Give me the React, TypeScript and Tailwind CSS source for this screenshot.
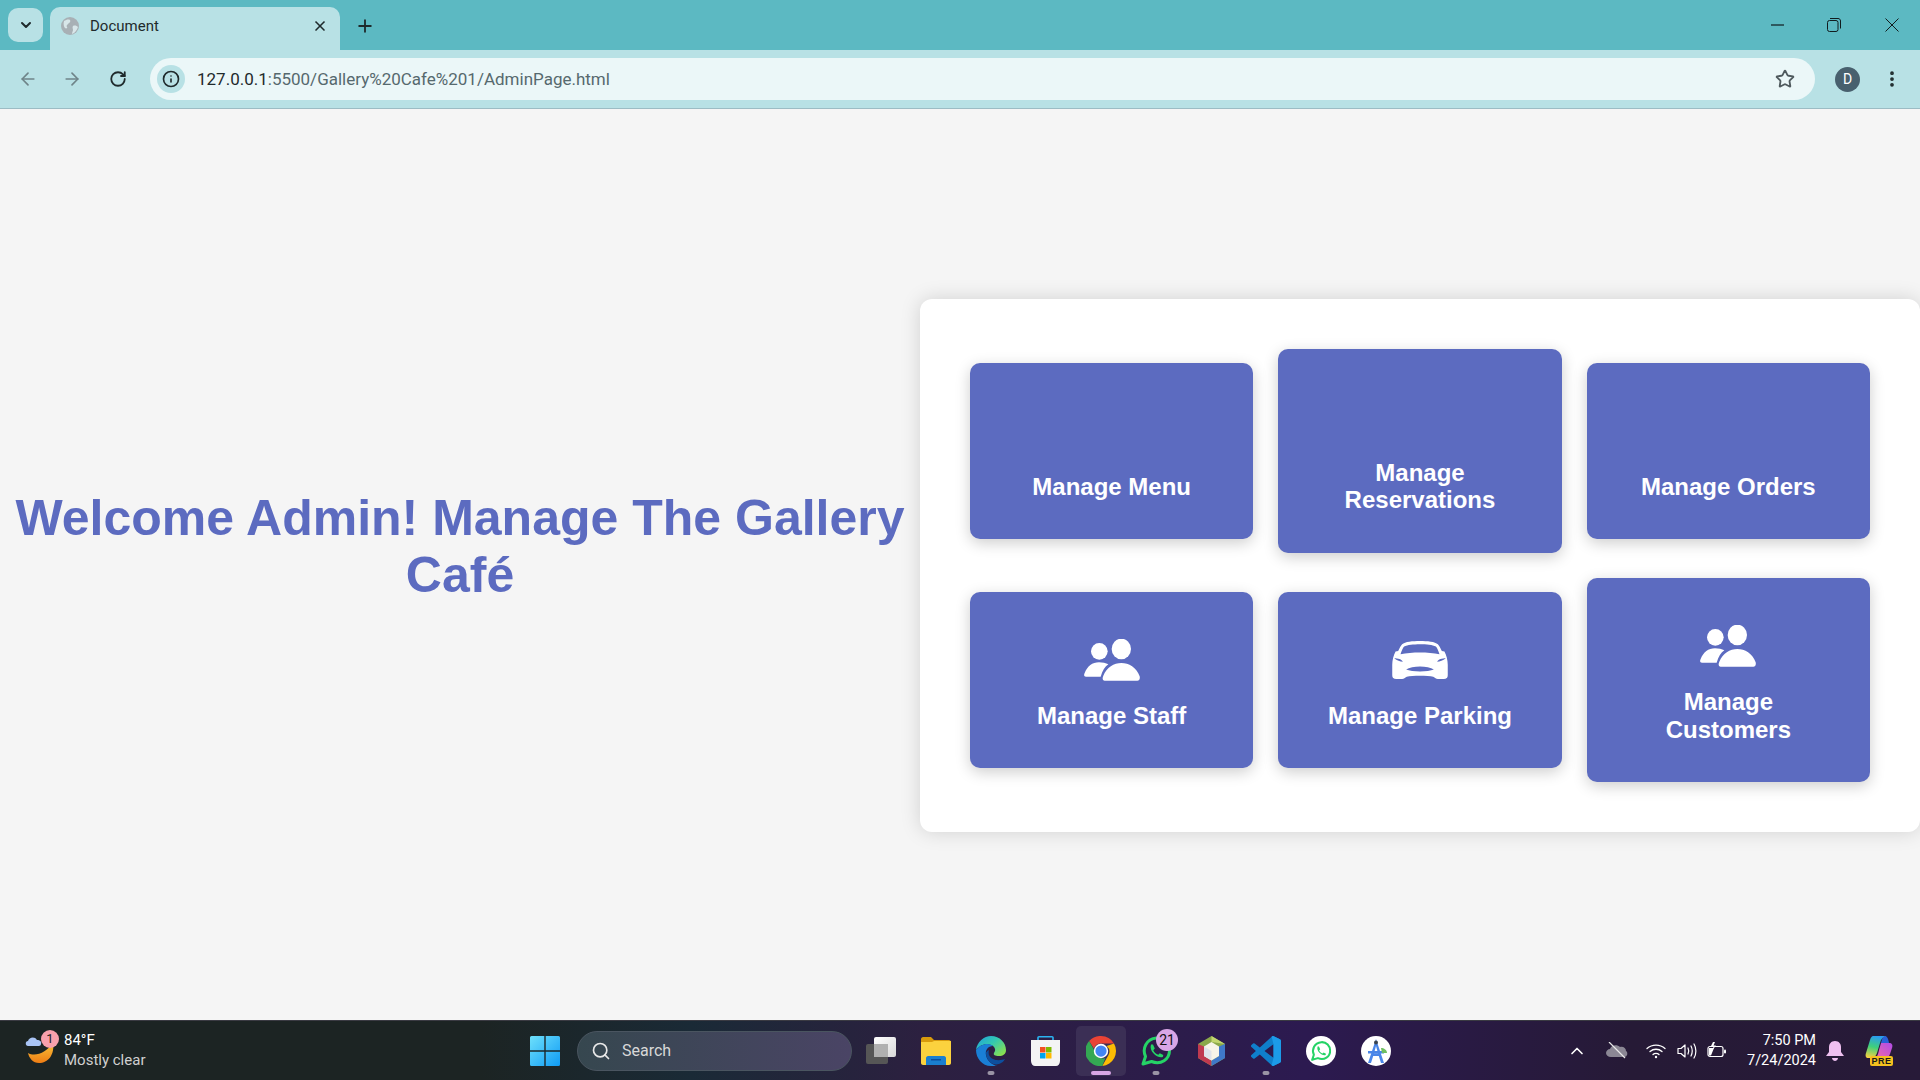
import React from 'react';
import { ArrowLeft, ArrowRight, RotateCw, Plus, X, ChevronDown, ChevronUp, Search, EllipsisVertical, Info, Star } from 'lucide-react';

const StaffIcon = () => (
    <svg width="56" height="42" viewBox="0 0 168 126" fill="#fff">
        <circle cx="46" cy="37" r="25" />
        <ellipse cx="112" cy="30" rx="29" ry="31" />
        <path d="M62 125C56 125 54 118 58 110C68 85 90 72 112 72C134 72 158 85 167 112C169 120 165 125 160 125Z" />
        <path d="M6 113C0 113-1 108 2 102C10 82 25 70 45 70C55 70 66 72 73 76C63 83 55 95 50 113Z" />
    </svg>
);

const CarIcon = () => (
    <svg width="56" height="38" viewBox="0 0 168 115" fill="#fff" fillRule="evenodd">
        <path d="M84 0C62 0 38 2 30 10C26 14 22 22 18 30L10 32C4 44 0 58 0 72L0 104C0 112 4 115 12 115L30 115C36 115 38 110 44 108C60 104 108 104 124 108C130 110 132 115 138 115L156 115C164 115 168 112 168 104L168 72C168 58 164 44 158 32L150 30C146 22 142 14 138 10C130 2 106 0 84 0ZM84 10C64 10 46 12 36 17C32 20 28 32 25 40C60 33 108 33 143 40C140 32 136 20 132 17C122 12 104 10 84 10ZM6 52C14 58 24 63 32 63C30 55 16 52 6 52ZM162 52C154 58 144 63 136 63C138 55 152 52 162 52ZM42 86C60 74 108 74 126 86C108 94 60 94 42 86Z" />
    </svg>
);

const Card = ({ title, icon }: { title: string; icon?: React.ReactNode }) => (
    <div className="bg-[#5c6bc0] rounded-[10px] shadow-[0_4px_15px_rgba(0,0,0,0.2)] pt-[36px] pb-[39px] px-[35px] flex flex-col items-center text-center">
        <div className="h-[64px] mb-[10px] flex items-center justify-center">{icon}</div>
        <h3 className="text-white font-bold text-[24px] leading-[27.6px] font-['Liberation_Sans',sans-serif]">{title}</h3>
    </div>
);

const GlobeIcon = () => (
    <svg width="18" height="18" viewBox="0 0 18 18">
        <circle cx="9" cy="9" r="9" fill="#a8b0b5" />
        <path d="M3 4c2-1 4-2 6-1 1 2-1 3-2 4s-2 2-1 3-1 2-2 1-2-4-1-7zM12 9c2-1 4 0 5 1-1 3-3 6-6 7 0-2 1-3 1-4s-1-3 0-4z" fill="#d8e6e9" />
    </svg>
);

const WinLogo = () => (
    <svg width="30" height="30" viewBox="0 0 30 30">
        <defs>
            <linearGradient id="win" x1="0" y1="0" x2="1" y2="1">
                <stop offset="0" stopColor="#6ee0fb" />
                <stop offset="1" stopColor="#0f9bf5" />
            </linearGradient>
        </defs>
        <path d="M0 1.500A1.500 1.500 0 0 1 1.500 0H14.300V14.300H0ZM15.700 0H28.500A1.500 1.500 0 0 1 30 1.500V14.300H15.700ZM0 15.700H14.300V30H1.500A1.500 1.500 0 0 1 0 28.500ZM15.700 15.700H30V28.500A1.500 1.500 0 0 1 28.500 30H15.700Z" fill="url(#win)" />
    </svg>
);

const WeatherIcon = () => (
    <svg width="30" height="36" viewBox="0 0 30 36">
        <defs>
            <linearGradient id="moon" x1="0" y1="0" x2="0" y2="1">
                <stop offset="0" stopColor="#f9c63c" />
                <stop offset="1" stopColor="#ee7d14" />
            </linearGradient>
        </defs>
        <path d="M3 20C10 24 22 20 28 9C30 22 23 30 14 30C8 30 4 25 3 20Z" fill="url(#moon)" />
        <path d="M3 13C0 13 0 8 3 8C4 4 10 3 12 7C15 7 17 9 16 11C16 12 15 13 14 13Z" fill="#a9c4f5" />
    </svg>
);

const TaskViewIcon = () => (
    <svg width="30" height="27" viewBox="0 0 30 27">
        <defs>
            <linearGradient id="tv" x1="0" y1="0" x2="1" y2="1">
                <stop offset="0" stopColor="#ffffff" />
                <stop offset="1" stopColor="#d8d8d8" />
            </linearGradient>
        </defs>
        <rect x="0" y="7" width="22" height="20" rx="2" fill="#565656" />
        <rect x="8" y="0" width="22" height="20" rx="2" fill="url(#tv)" />
        <rect x="8" y="7" width="14" height="13" fill="#b0b0b0" />
    </svg>
);

const FolderIcon = () => (
    <svg width="30" height="28" viewBox="0 0 30 28">
        <path d="M0 2C0 1 1 0 2 0H10L13 3H28C29 3 30 4 30 5V10H0Z" fill="#d89b0c" />
        <path d="M0 5H11L13 4H30V26C30 27 29 28 28 28H2C1 28 0 27 0 26Z" fill="#fbd23e" />
        <path d="M5 21C5 20 6 19 7 19H23C24 19 25 20 25 21V28H5Z" fill="#1a7fd0" />
        <rect x="10" y="22" width="10" height="1.500" fill="#0b4e9e" />
    </svg>
);

const EdgeIcon = () => (
    <svg width="30" height="30" viewBox="0 0 30 30">
        <defs>
            <linearGradient id="edge1" x1="0" y1="0" x2="1" y2="0.800">
                <stop offset="0" stopColor="#1f9fe0" />
                <stop offset="0.500" stopColor="#33c9b0" />
                <stop offset="1" stopColor="#8be04e" />
            </linearGradient>
        </defs>
        <path d="M0 14C1 6 8 0 15 0C24 0 30 7 30 14C30 18 27 20 23 20C19 20 17 19 18 17C19 15 20 14 18 11C15 7 5 7 0 14Z" fill="url(#edge1)" />
        <path d="M0 14C4 8 13 6 17 10C12 10 9 14 10 19C11 25 17 30 21 29C19 30 17 30 15 30C6 30 0 22 0 14Z" fill="#1a7fd6" />
        <path d="M10 17C10 24 16 30 23 28C26 27 28 25 29 23C26 24 21 25 17 23C13 21 12 18 13 14C11 15 10 16 10 17Z" fill="#0d4f9e" />
    </svg>
);

const StoreIcon = () => (
    <svg width="30" height="30" viewBox="0 0 30 30">
        <path d="M7 5V1.500C7 1 7.500 0.800 8 0.800H21C21.500 0.800 22 1 22 1.500V5" fill="none" stroke="#2bb3f0" strokeWidth="1.600" />
        <path d="M0 4H29V25C29 28 27 30 25 30H4C2 30 0 28 0 25Z" fill="#f4f4f4" />
        <rect x="9" y="11" width="5.500" height="5.500" fill="#f25022" />
        <rect x="15" y="11" width="5.500" height="5.500" fill="#7fba00" />
        <rect x="9" y="17" width="5.500" height="5.500" fill="#00a4ef" />
        <rect x="15" y="17" width="5.500" height="5.500" fill="#ffb900" />
    </svg>
);

const ChromeIcon = () => (
    <svg width="30" height="30" viewBox="0 0 48 48">
        <path d="M24 0a24 24 0 0 1 20.800 12H24a12 12 0 0 0-11.300 8L5 8A24 24 0 0 1 24 0Z" fill="#ea4335" />
        <path d="M44.800 12A24 24 0 0 1 26 47.900L36 30.500A12 12 0 0 0 33 16Z" fill="#fbbc04" />
        <path d="M5 8l10 18a12 12 0 0 0 16 9L26 48A24 24 0 0 1 5 8Z" fill="#34a853" />
        <circle cx="24" cy="24" r="11.500" fill="#fff" />
        <circle cx="24" cy="24" r="9" fill="#4285f4" />
    </svg>
);

const WhatsAppIcon = () => (
    <svg width="30" height="30" viewBox="0 0 30 30">
        <path d="M2 28L4.500 20.500C1 13 5 3 15.500 2C23 1.500 28.500 7.500 28.500 14.500C28.500 23 20 29.500 10.500 25.500Z" fill="none" stroke="#25d366" strokeWidth="3" strokeLinejoin="round" />
        <path d="M10 8.500L12 8.500L13.800 12.500L12.300 14.200C13.300 16.200 14.800 17.700 17.300 18.700L18.800 17.200L22.300 18.900L21.800 20.900C17.500 23 7.500 16 10 8.500Z" fill="#25d366" />
    </svg>
);

const GemIcon = () => (
    <svg width="27" height="30" viewBox="0 0 27 30">
        <path d="M13.500 0L27 8V22L13.500 30L0 22V8Z" fill="#8aa84a" />
        <path d="M13.500 0L27 8L13.500 6Z" fill="#c2d66f" />
        <path d="M0 8L6 10.500V20L13.500 24.500V30L0 22Z" fill="#c0394f" />
        <path d="M27 8L21 10.500V20L13.500 24.500V30L27 22Z" fill="#3f78c9" />
        <path d="M6 10.500L13.500 6L21 10.500V20L13.500 24.500L6 20Z" fill="#f6f4e8" />
        <path d="M6 10.500L13.500 15V24.500L6 20Z" fill="#dfe3ea" />
    </svg>
);

const VSCodeIcon = () => (
    <svg width="30" height="30" viewBox="0 0 100 100">
        <path d="M70.900 99.300A6.200 6.200 0 0 0 75.900 99.100L96.500 89.200A6.200 6.200 0 0 0 100 83.600V16.400A6.200 6.200 0 0 0 96.500 10.800L75.900 0.900A6.200 6.200 0 0 0 68.800 2.100L29.400 38.100L12.200 25A4.200 4.200 0 0 0 6.900 25.200L1.400 30.300A4.200 4.200 0 0 0 1.400 36.500L16.300 50L1.400 63.600A4.200 4.200 0 0 0 1.400 69.800L6.900 74.800A4.200 4.200 0 0 0 12.200 75L29.400 62L68.800 97.900ZM75 27.300L45.100 50L75 72.700Z" fill="#0f7fcb" fillRule="evenodd" />
        <path d="M70.900 99.300A6.200 6.200 0 0 0 75.900 99.100L96.500 89.200A6.200 6.200 0 0 0 100 83.600V16.400A6.200 6.200 0 0 0 96.500 10.800L75.900 0.900A6.200 6.200 0 0 0 68.800 2.100L75 27.300V72.700L68.800 97.900Z" fill="#1c9be8" />
    </svg>
);

const WhatsAppWhite = () => (
    <div className="w-[30px] h-[30px] rounded-full bg-white flex items-center justify-center">
        <div className="scale-[0.68] flex"><WhatsAppIcon /></div>
    </div>
);

const AStudioIcon = () => (
    <svg width="30" height="30" viewBox="0 0 30 30">
        <circle cx="15" cy="15" r="15" fill="#fff" />
        <path d="M15 3L23 27H20L17.800 20H12.200L10 27H7ZM13 17.200H17L15 10Z" fill="#4a86e8" fillRule="evenodd" />
        <rect x="7" y="15" width="16" height="2.500" fill="#4a86e8" />
        <circle cx="15" cy="6.500" r="2" fill="#3a4450" />
        <path d="M20 12C23 12 26 14 26 17H21Z" fill="#6fbf60" />
    </svg>
);

const OneDriveOff = () => (
    <svg width="22" height="18" viewBox="0 0 22 18">
        <path d="M5 15C2 15 0 13 0 11C0 9 2 7 4 7C5 3 11 2 14 5C17 4 20 6 20 9C22 10 22 15 18 15Z" fill="#8b8794" />
        <path d="M3 0L19 16" stroke="#e8e8e8" strokeWidth="1.200" />
    </svg>
);

const WifiIcon = () => (
    <svg width="20" height="16" viewBox="0 0 20 16" fill="none" stroke="#fff" strokeWidth="1.300" strokeLinecap="round">
        <path d="M1 5.500C6 1 14 1 19 5.500" />
        <path d="M4 8.500C7.500 5.500 12.500 5.500 16 8.500" />
        <path d="M7 11.500C8.500 10 11.500 10 13 11.500" />
        <circle cx="10" cy="14" r="1.200" fill="#fff" stroke="none" />
    </svg>
);

const VolumeIcon = () => (
    <svg width="20" height="18" viewBox="0 0 20 18" fill="none" stroke="#fff" strokeWidth="1.200" strokeLinejoin="round" strokeLinecap="round">
        <path d="M1 6.500H4L8 3V15L4 11.500H1Z" />
        <path d="M11 6C12 8 12 10 11 12" />
        <path d="M14 4C15.500 7 15.500 11 14 14" />
        <path d="M17 2C19.500 6 19.500 12 17 16" />
    </svg>
);

const BatteryIcon = () => (
    <svg width="20" height="18" viewBox="0 0 20 18">
        <rect x="1" y="4.500" width="15" height="10" rx="2" fill="none" stroke="#fff" strokeWidth="1.200" />
        <rect x="17" y="7.500" width="2" height="4" rx="1" fill="#fff" />
        <path d="M2 6H7L4 13.500H2Z" fill="#fff" />
        <path d="M6 0L3.500 5H6.500L5 8.500L9 3.500H6.500L8 0Z" fill="#fff" />
    </svg>
);

const BellIcon = () => (
    <svg width="18" height="20" viewBox="0 0 18 20">
        <path d="M9 0C5 0 3 3 3 6V11L0 15H18L15 11V6C15 3 13 0 9 0Z" fill="#efc0f0" />
        <path d="M6 17H12C12 19 10 20 9 20C8 20 6 19 6 17Z" fill="#efc0f0" />
    </svg>
);

const CopilotIcon = () => (
    <div className="relative w-[30px] h-[30px]">
        <svg width="28" height="22" viewBox="0 0 28 22">
            <defs>
                <linearGradient id="cp1" x1="0.500" y1="0" x2="0.300" y2="1">
                    <stop offset="0" stopColor="#2a9cf0" />
                    <stop offset="0.500" stopColor="#3fd07a" />
                    <stop offset="1" stopColor="#f5d142" />
                </linearGradient>
                <linearGradient id="cp2" x1="1" y1="0" x2="0" y2="1">
                    <stop offset="0" stopColor="#b04ce8" />
                    <stop offset="1" stopColor="#f06aa8" />
                </linearGradient>
            </defs>
            <path d="M20 0C22 0 23 2 24 7H16C17 3 18 0 20 0Z" fill="#2a60d8" />
            <path d="M16 7H24C27 7 28 9 27 12L25 18C24 21 22 22 19 22H10C12 21 13 19 14 14Z" fill="url(#cp2)" />
            <path d="M8 0H20C18 1 16 3 15 7L12 17C11 20 9 22 6 22H3C1 22 0 20 1 17L5 4C6 1 7 0 8 0Z" fill="url(#cp1)" />
        </svg>
        <span className="absolute left-[5px] top-[20px] w-[23px] h-[10px] rounded-[2px] bg-[#f5c01f] text-[9px] leading-[10px] font-bold text-[#1a1a1a] text-center font-['Liberation_Sans',sans-serif] tracking-[0.5px]">PRE</span>
    </div>
);

const TaskbarItem = ({ children, dot, active }: { children: React.ReactNode; dot?: boolean; active?: boolean }) => (
    <div className={`relative w-[50px] h-[50px] mx-[2.5px] flex items-center justify-center rounded-[5px] ${active ? 'bg-[#3b2f55]' : ''}`}>
        {children}
        {dot && <span className="absolute bottom-[1px] left-1/2 -translate-x-1/2 w-[7px] h-[4px] rounded-full bg-[#9a94a5]"></span>}
        {active && <span className="absolute bottom-[1px] left-1/2 -translate-x-1/2 w-[20px] h-[4px] rounded-full bg-[#d8a6e6]"></span>}
    </div>
);

const App = () => {
    return (
        <div className="w-full h-screen flex flex-col overflow-hidden bg-[#f5f5f5] font-['Roboto',sans-serif]">
            {/* tab strip */}
            <div className="h-[50px] bg-[#5cb9c2] flex items-end pl-2 relative shrink-0">
                <div className="w-[35px] h-[34px] mb-2 rounded-[10px] bg-[#b8e1e5] flex items-center justify-center text-[#1f2a2c]">
                    <ChevronDown size={16} strokeWidth={3} />
                </div>
                <div className="w-[290px] h-[43px] ml-[7px] rounded-t-[10px] bg-[#b8e1e5] flex items-center pl-[11px] pr-[12px] pb-[5px]">
                    <GlobeIcon />
                    <span className="ml-[11px] text-[15px] text-[#1f2a2c] leading-none">Document</span>
                    <X size={16} strokeWidth={2.5} className="ml-auto text-[#1f2a2c]" />
                </div>
                <Plus size={20} strokeWidth={2.2} className="ml-[15px] self-center mt-[1px] text-[#1f2a2c]" />
                <div className="ml-auto self-start flex items-center text-[#111c1e] h-[50px] pr-[21px]">
                    <svg width="13" height="2" viewBox="0 0 13 2" className="mr-[43px]">
                        <rect width="13" height="1.200" y="0.400" fill="currentColor" />
                    </svg>
                    <svg width="14" height="14" viewBox="0 0 14 14" fill="none" stroke="currentColor" strokeWidth="1" className="mr-[44px]">
                        <rect x="0.500" y="2.500" width="10.500" height="11" rx="2" />
                        <path d="M3 0.500H11C12.500 0.500 13.500 1.500 13.500 3V10.500" />
                    </svg>
                    <svg width="14" height="14" viewBox="0 0 14 14" fill="none" stroke="currentColor" strokeWidth="1">
                        <path d="M0.500 0.500L13.500 13.500M13.500 0.500L0.500 13.500" />
                    </svg>
                </div>
            </div>

            {/* toolbar */}
            <div className="h-[59px] bg-[#b8e1e5] border-b border-[#9cbcc4] flex items-center pl-[18px] shrink-0">
                <ArrowLeft size={20} className="text-[#6f8489]" />
                <ArrowRight size={20} className="ml-[24px] text-[#6f8489]" />
                <RotateCw size={18} strokeWidth={2.4} className="ml-[27px] text-[#1f2a2c]" />
                <div className="ml-[23px] w-[1665px] h-[42px] rounded-full bg-[#ebf7f8] flex items-center pl-[7px] pr-[20px]">
                    <span className="w-[28px] h-[28px] rounded-full bg-[#b8e1e5] flex items-center justify-center">
                        <Info size={18} strokeWidth={2.2} className="text-[#1f2a2c]" />
                    </span>
                    <span className="ml-[12px] mt-[2px] text-[17px] text-[#1f2a2c]">127.0.0.1<span className="text-[#56696e]">:5500/Gallery%20Cafe%201/AdminPage.html</span></span>
                    <Star size={20} strokeWidth={2.2} className="ml-auto text-[#4f5a5e]" />
                </div>
                <span className="ml-[20px] w-[25px] h-[25px] rounded-full bg-[#48606e] text-white text-[14px] flex items-center justify-center">D</span>
                <EllipsisVertical size={20} strokeWidth={2.5} className="ml-[22px] text-[#1f2a2c]" />
            </div>

            {/* page */}
            <main className="flex-1 flex items-center min-h-0 pt-[2px]">
                <div className="w-[920px] px-[10px] text-center">
                    <h1 className="mb-[37px] text-[50px] leading-[57.5px] font-bold text-[#5c6bc0] font-['Liberation_Sans',sans-serif]">Welcome Admin! Manage The Gallery Café</h1>
                </div>
                <div className="w-[1000px] bg-white rounded-[12px] p-[50px] shadow-[0_0_20px_rgba(0,0,0,0.15)]">
                    <div className="grid grid-cols-3 gap-[25px] items-center">
                        <Card title="Manage Menu" />
                        <Card title="Manage Reservations" />
                        <Card title="Manage Orders" />
                        <Card title="Manage Staff" icon={<StaffIcon />} />
                        <Card title="Manage Parking" icon={<CarIcon />} />
                        <Card title="Manage Customers" icon={<StaffIcon />} />
                    </div>
                </div>
            </main>

            {/* taskbar */}
            <div className="h-[60px] shrink-0 border-t border-[#3a3a42] bg-[linear-gradient(90deg,#1c2423_0%,#1c2423_25%,#1a2a36_36%,#2c2040_48%,#2c1a50_68%,#261a36_85%,#271a38_100%)] flex items-center relative text-white">
                <div className="relative ml-[25px] w-[30px] h-[36px]">
                    <WeatherIcon />
                    <span className="absolute left-[16px] -top-[3px] w-[18px] h-[18px] rounded-full bg-[#f9a0ac] text-[#222] text-[13px] leading-[18px] text-center">1</span>
                </div>
                <div className="ml-[9px] w-[100px] text-[15px] leading-[20px] pb-[1px]">
                    <div className="text-white">84°F</div>
                    <div className="text-[#d0d0d0]">Mostly clear</div>
                </div>
                <div className="ml-[366px]"><WinLogo /></div>
                <div className="ml-[17px] w-[275px] h-[40px] rounded-full border border-[#4a5560] bg-[linear-gradient(90deg,#36474f,#4a4465)] flex items-center pl-[13px]">
                    <Search size={20} strokeWidth={2} className="text-[#e8e8e8]" />
                    <span className="ml-[11px] text-[16px] text-[#d8d8d8]">Search</span>
                </div>
                <div className="ml-[1.500px] flex items-center">
                    <TaskbarItem><TaskViewIcon /></TaskbarItem>
                    <TaskbarItem><FolderIcon /></TaskbarItem>
                    <TaskbarItem dot><EdgeIcon /></TaskbarItem>
                    <TaskbarItem><StoreIcon /></TaskbarItem>
                    <TaskbarItem active><ChromeIcon /></TaskbarItem>
                    <TaskbarItem dot>
                        <WhatsAppIcon />
                        <span className="absolute left-[25px] top-[3px] w-[22px] h-[22px] rounded-full bg-[#d8a6e6] text-[#111] text-[14px] leading-[22px] text-center">21</span>
                    </TaskbarItem>
                    <TaskbarItem><GemIcon /></TaskbarItem>
                    <TaskbarItem dot><VSCodeIcon /></TaskbarItem>
                    <TaskbarItem><WhatsAppWhite /></TaskbarItem>
                    <TaskbarItem><AStudioIcon /></TaskbarItem>
                </div>
                <div className="ml-auto flex items-center pr-[25px]">
                    <ChevronUp size={20} strokeWidth={2} />
                    <span className="ml-[19px]"><OneDriveOff /></span>
                    <span className="ml-[18px]"><WifiIcon /></span>
                    <span className="ml-[11px]"><VolumeIcon /></span>
                    <span className="ml-[10px]"><BatteryIcon /></span>
                    <div className="ml-[20px] text-right text-[14.500px] leading-[20px] text-white">
                        <div>7:50 PM</div>
                        <div>7/24/2024</div>
                    </div>
                    <span className="ml-[10px] mr-[21px]"><BellIcon /></span>
                    <CopilotIcon />
                </div>
            </div>
        </div>
    );
};

export default App;
